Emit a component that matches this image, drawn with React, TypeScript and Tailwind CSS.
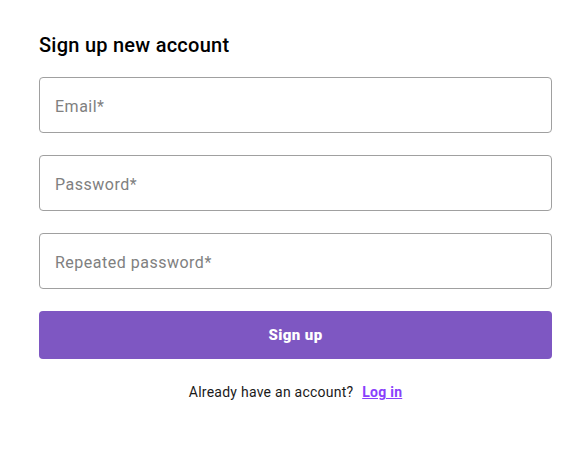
export default function App() {
  const fields = ["Email*", "Password*", "Repeated password*"]

  return (
    <div className="min-h-[452px] w-[580px] bg-white font-['Roboto',sans-serif]">
      <div className="ml-[39px] w-[513px] pt-[31px]">
        <h1 className="mb-[18px] text-[20px] font-medium leading-7 tracking-[0.25px] text-black">Sign up new account</h1>

        <div className="flex flex-col gap-[22px]">
          {fields.map((label) => (
            <input
              key={label}
              placeholder={label}
              className="h-[56px] w-full rounded-[4px] border border-[#a0a0a0] px-[15px] pt-[2px] text-[16px] tracking-[0.5px] text-black outline-none placeholder:text-[#808080]"
            />
          ))}
          <button className="h-[48px] w-full rounded-[4px] bg-[#7e57c2] text-[15px] font-black tracking-[0.4px] text-white">
            Sign up
          </button>
        </div>

        <p className="mt-[23px] text-center text-[14px] leading-5 tracking-[0.25px] text-[#1a1a1a]">
          Already have an account?{"  "}
          <a href="#" className="ml-[5px] font-bold text-[#8a3ffc] underline">Log in</a>
        </p>
      </div>
    </div>
  )
}
